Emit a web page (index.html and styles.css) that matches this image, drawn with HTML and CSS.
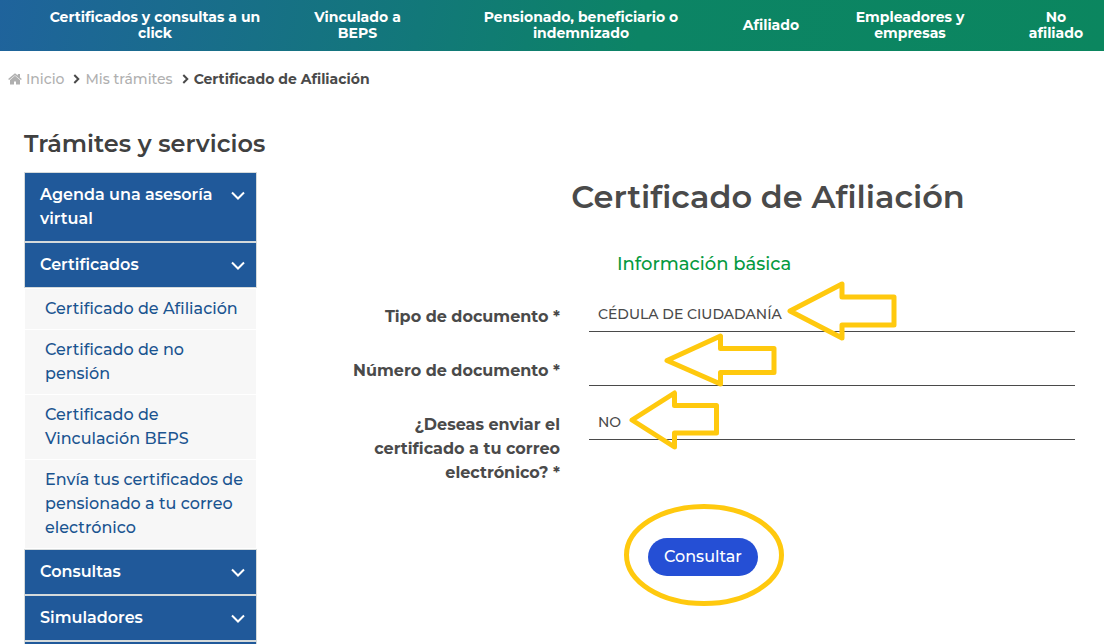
FILE: index.html
```html
<!DOCTYPE html>
<html lang="es">
<head>
<meta charset="utf-8">
<meta name="viewport" content="width=device-width, initial-scale=1">
<title>Certificado de Afiliación</title>
<link rel="stylesheet" href="styles.css">
</head>
<body>
<nav class="topnav" aria-label="Principal">
  <a href="#">Certificados y consultas a un<br>click</a>
  <a href="#">Vinculado a<br>BEPS</a>
  <a href="#">Pensionado, beneficiario o<br>indemnizado</a>
  <a href="#">Afiliado</a>
  <a href="#">Empleadores y<br>empresas</a>
  <a href="#">No<br>afiliado</a>
</nav>
<nav class="crumbs" aria-label="Ruta">
  <a href="#" class="crumb-home"><svg class="home" viewBox="0 0 14 12" aria-hidden="true"><path d="M7 2.800 2 6.900V11.500h4V8.500h2v3h4V6.900z"/><path d="M7 .3.1 6l1 1.100L7 2.200l5.900 4.900 1-1.100-1.900-1.600V1H9.800v1.600z"/></svg>Inicio</a>
  <svg class="sep" viewBox="0 0 7 10" aria-hidden="true"><path d="M1.300 1 5.300 5 1.300 9"/></svg>
  <a href="#">Mis trámites</a>
  <svg class="sep" viewBox="0 0 7 10" aria-hidden="true"><path d="M1.300 1 5.300 5 1.300 9"/></svg>
  <strong>Certificado de Afiliación</strong>
</nav>
<div class="page">
  <aside class="side">
    <h2>Trámites y servicios</h2>
    <ul class="menu">
      <li><button type="button" class="group"><span>Agenda una asesoría virtual</span><svg class="chev" viewBox="0 0 14 9" aria-hidden="true"><path d="M1 1.500 7 7.500 13 1.500"/></svg></button></li>
      <li><button type="button" class="group" aria-expanded="true"><span>Certificados</span><svg class="chev" viewBox="0 0 14 9" aria-hidden="true"><path d="M1 1.500 7 7.500 13 1.500"/></svg></button>
        <ul class="submenu">
          <li><a href="#">Certificado de Afiliación</a></li>
          <li><a href="#">Certificado de no pensión</a></li>
          <li><a href="#">Certificado de Vinculación BEPS</a></li>
          <li><a href="#">Envía tus certificados de pensionado a tu correo electrónico</a></li>
        </ul>
      </li>
      <li><button type="button" class="group"><span>Consultas</span><svg class="chev" viewBox="0 0 14 9" aria-hidden="true"><path d="M1 1.500 7 7.500 13 1.500"/></svg></button></li>
      <li><button type="button" class="group"><span>Simuladores</span><svg class="chev" viewBox="0 0 14 9" aria-hidden="true"><path d="M1 1.500 7 7.500 13 1.500"/></svg></button></li>
      <li class="menu-end"></li>
    </ul>
  </aside>
  <main class="content">
    <h1>Certificado de Afiliación</h1>
    <h3>Información básica</h3>
    <form>
      <div class="row">
        <label for="tipo">Tipo de documento *</label>
        <div class="field">
          <select id="tipo"><option>CÉDULA DE CIUDADANÍA</option></select>
          <svg class="mark mark-tipo" viewBox="0 0 110 60" aria-hidden="true"><path d="M3 30 55 3V16H107V44H55V57Z"/></svg>
        </div>
      </div>
      <div class="row">
        <label for="numero">Número de documento *</label>
        <div class="field">
          <input id="numero" type="text">
          <svg class="mark mark-numero" viewBox="0 0 114 54" aria-hidden="true"><path d="M3 27.500 56.500 3V15.500H110V39.500H56.500V51Z"/></svg>
        </div>
      </div>
      <div class="row">
        <label for="correo">¿Deseas enviar el certificado a tu correo electrónico? *</label>
        <div class="field">
          <select id="correo"><option>NO</option></select>
          <svg class="mark mark-correo" viewBox="0 0 92 60" aria-hidden="true"><path d="M3 30 45.500 3V15.500H87.500V43H45.500V57Z"/></svg>
        </div>
      </div>
      <div class="actions">
        <div class="submit">
          <button type="submit">Consultar</button>
          <svg class="ring" viewBox="0 0 160 102" aria-hidden="true"><ellipse cx="80" cy="51" rx="77.500" ry="48.500"/></svg>
        </div>
      </div>
    </form>
  </main>
</div>
</body>
</html>
```
FILE: styles.css
```css
* { box-sizing: border-box; }
body {
  margin: 0;
  background: #fff;
  color: #4a4a4a;
  font: 500 16px/24px Montserrat, Inter, "Liberation Sans", sans-serif;
}
h1, h2, h3, ul { margin: 0; padding: 0; }
ul { list-style: none; }
a { color: inherit; text-decoration: none; }
button, input, select { font: inherit; color: inherit; }

.topnav {
  display: grid;
  grid-template-columns: 268fr 137fr 310fr 70fr 208fr 84fr;
  align-items: center;
  padding: 9px 6px 10px 21px;
  background: linear-gradient(100deg, #1f639c 0%, #127879 38%, #0c8465 58%, #0b865f 100%);
  color: #fff;
  font-size: 14px;
  font-weight: 700;
  line-height: 16px;
  text-align: center;
}
.topnav a { white-space: nowrap; }

.crumbs {
  display: flex;
  align-items: center;
  padding: 16px 8px;
  font-size: 14px;
}
.crumbs a { color: #b0b0b0; }
.crumb-home { display: flex; align-items: center; gap: 4px; }
.home { width: 14px; height: 12px; fill: #b0b0b0; }
.sep { width: 7px; height: 10px; margin: 0 5px 0 9px; fill: none; stroke: #4a4a4a; stroke-width: 2; }
.crumbs strong { font-weight: 700; }

.page {
  display: grid;
  grid-template-columns: minmax(0, 233fr) minmax(0, 758fr);
  gap: 60px;
  padding: 25px 29px 0 24px;
}
.side h2 {
  margin-bottom: 16px;
  color: #404040;
  font-size: 24px;
  font-weight: 600;
  line-height: 24px;
  white-space: nowrap;
}
.group {
  display: flex;
  justify-content: space-between;
  align-items: flex-start;
  width: 100%;
  padding: 10px 11px 10px 15px;
  border: 1px solid #d5dadb;
  background: #20599a;
  color: #fff;
  font-weight: 600;
  text-align: left;
}
.chev { flex: none; width: 14px; height: 9px; margin-top: 8px; fill: none; stroke: #fff; stroke-width: 2; }
.submenu { margin: 1px 1px 0; }
.submenu li {
  padding: 8px 4px 8px 20px;
  border-bottom: 1px solid #fff;
  background: #f7f7f7;
  color: #1a5490;
}
.submenu a { display: block; }
.menu-end { height: 3px; border: 1px solid #d5dadb; border-bottom: 0; background: #20599a; }

.content { padding-top: 43px; }
h1 {
  padding-left: 144px;
  font-size: 32px;
  font-weight: 600;
  line-height: 44px;
  text-align: center;
}
h3 {
  margin: 33px 0 18px;
  padding-left: 300px;
  color: #069a3f;
  font-size: 18px;
  font-weight: 500;
}
.row {
  display: grid;
  grid-template-columns: minmax(0, 243fr) minmax(0, 486fr);
  gap: 29px;
  min-height: 54px;
}
.row label { padding: 11px 0 0 30px; font-weight: 700; text-align: right; }
.field { position: relative; }
.field input, .field select {
  display: block;
  width: 100%;
  height: 38px;
  padding: 3px 9px 0;
  border: 0;
  border-bottom: 1px solid #4a4a4a;
  border-radius: 0;
  background: transparent;
  font-size: 14px;
  appearance: none;
  outline: 0;
}
.mark { position: absolute; fill: none; stroke: #ffc90e; stroke-width: 5; stroke-linejoin: round; }
.mark-tipo { left: 198px; top: -13px; width: 110px; }
.mark-numero { left: 75px; top: -15px; width: 114px; }
.mark-correo { left: 40px; top: -12px; width: 92px; }

.actions { padding: 53px 0 0 331px; }
.submit { position: relative; width: max-content; }
.submit button {
  display: block;
  padding: 7px 16px;
  border: 0;
  border-radius: 19px;
  background: #254fd5;
  color: #fff;
}
.ring { position: absolute; left: -24px; top: -34px; width: 160px; fill: none; stroke: #ffc90e; stroke-width: 5; }
```
